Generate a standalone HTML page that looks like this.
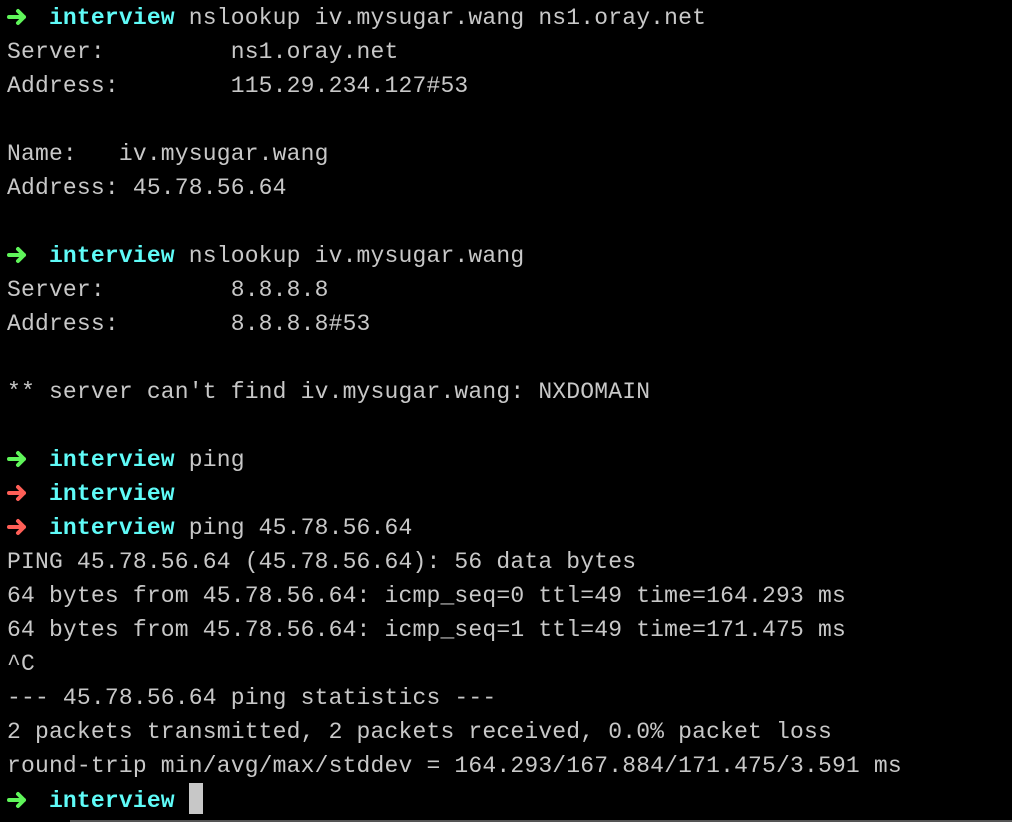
<!DOCTYPE html>
<html><head><meta charset="utf-8"><style>
html,body{margin:0;padding:0;background:#000;width:1012px;height:822px;overflow:hidden}
pre{margin:0;position:absolute;left:7px;top:1px;font-family:"Liberation Mono",monospace;font-size:23px;line-height:34px;letter-spacing:0.18px;color:#c8c8c8;white-space:pre}
.c{color:#5ffbf8;font-weight:bold}
.a{display:inline-block;width:13.98px;height:20px;position:relative;vertical-align:-3px}
.a svg{position:absolute;left:0;top:1px}
.cur{display:inline-block;width:14px;height:31px;background:#c7c7c7;vertical-align:-7px}
.bar{position:absolute;left:70px;right:0;bottom:0;height:2px;background:#555}
</style></head><body>
<svg width="0" height="0" style="position:absolute"><defs><g id="ar"><path d="M2 9H17M11 3L17 9L11 15" fill="none" stroke-width="4" stroke-linecap="round" stroke-linejoin="round"/></g></defs></svg>
<pre><span class="a"><svg width="22" height="18"><use href="#ar" stroke="#5ff55a"/></svg></span>  <span class="c">interview</span> nslookup iv.mysugar.wang ns1.oray.net
Server:         ns1.oray.net
Address:        115.29.234.127#53

Name:   iv.mysugar.wang
Address: 45.78.56.64

<span class="a"><svg width="22" height="18"><use href="#ar" stroke="#5ff55a"/></svg></span>  <span class="c">interview</span> nslookup iv.mysugar.wang
Server:         8.8.8.8
Address:        8.8.8.8#53

** server can't find iv.mysugar.wang: NXDOMAIN

<span class="a"><svg width="22" height="18"><use href="#ar" stroke="#5ff55a"/></svg></span>  <span class="c">interview</span> ping
<span class="a"><svg width="22" height="18"><use href="#ar" stroke="#ff5f57"/></svg></span>  <span class="c">interview</span>
<span class="a"><svg width="22" height="18"><use href="#ar" stroke="#ff5f57"/></svg></span>  <span class="c">interview</span> ping 45.78.56.64
PING 45.78.56.64 (45.78.56.64): 56 data bytes
64 bytes from 45.78.56.64: icmp_seq=0 ttl=49 time=164.293 ms
64 bytes from 45.78.56.64: icmp_seq=1 ttl=49 time=171.475 ms
^C
--- 45.78.56.64 ping statistics ---
2 packets transmitted, 2 packets received, 0.0% packet loss
round-trip min/avg/max/stddev = 164.293/167.884/171.475/3.591 ms
<span class="a"><svg width="22" height="18"><use href="#ar" stroke="#5ff55a"/></svg></span>  <span class="c">interview</span> <span class="cur"></span></pre>
<div class="bar"></div>
</body></html>
